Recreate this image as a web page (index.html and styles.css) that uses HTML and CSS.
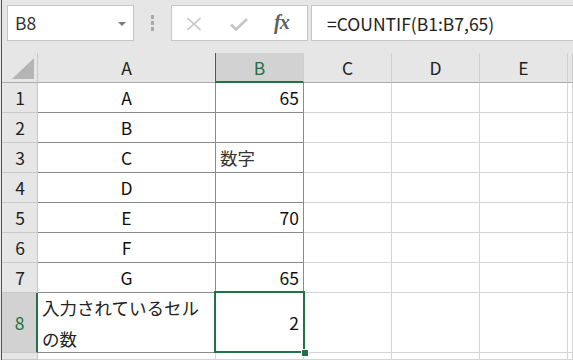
FILE: index.html
```html
<!DOCTYPE html>
<html lang="ja">
<head>
<meta charset="utf-8">
<link rel="stylesheet" href="styles.css">
</head>
<body>
<div class="app">
  <div class="toolbar">
    <div class="namebox"><span class="name">B8</span><span class="arrow"></span></div>
    <div class="dots"><i></i><i></i><i></i></div>
    <div class="fxbox">
      <svg class="ic-x" width="16" height="14" viewBox="0 0 16 14"><path d="M1.5 1 L14.5 13 M14.5 1 L1.5 13" stroke="#c4c4c4" stroke-width="1.7" fill="none"/></svg>
      <svg class="ic-ok" width="18" height="13" viewBox="0 0 18 13"><path d="M1 6.5 L6 11.5 L17 1" stroke="#c4c4c4" stroke-width="2.6" fill="none"/></svg>
      <span class="fx">fx</span>
    </div>
    <div class="formula">=COUNTIF(B1:B7,65)</div>
  </div>
  <div class="sheet">
    <div class="corner"><span class="tri"></span></div>
    <div class="ch">A</div>
    <div class="ch sel">B</div>
    <div class="ch">C</div>
    <div class="ch">D</div>
    <div class="ch">E</div>
    <div class="ch"></div>

    <div class="rh">1</div><div class="c a">A</div><div class="c b num">65</div><div class="c"></div><div class="c"></div><div class="c"></div><div class="c"></div>
    <div class="rh">2</div><div class="c a">B</div><div class="c b"></div><div class="c"></div><div class="c"></div><div class="c"></div><div class="c"></div>
    <div class="rh">3</div><div class="c a">C</div><div class="c b txt">数字</div><div class="c"></div><div class="c"></div><div class="c"></div><div class="c"></div>
    <div class="rh">4</div><div class="c a">D</div><div class="c b"></div><div class="c"></div><div class="c"></div><div class="c"></div><div class="c"></div>
    <div class="rh">5</div><div class="c a">E</div><div class="c b num">70</div><div class="c"></div><div class="c"></div><div class="c"></div><div class="c"></div>
    <div class="rh">6</div><div class="c a">F</div><div class="c b"></div><div class="c"></div><div class="c"></div><div class="c"></div><div class="c"></div>
    <div class="rh">7</div><div class="c a">G</div><div class="c b num">65</div><div class="c"></div><div class="c"></div><div class="c"></div><div class="c"></div>
    <div class="rh rsel">8</div><div class="c a wrap">入力されているセルの数</div><div class="c b num active">2<span class="selbox"><span class="handle"></span></span></div><div class="c"></div><div class="c"></div><div class="c"></div><div class="c"></div>
    <div class="rh"></div><div class="c"></div><div class="c"></div><div class="c"></div><div class="c"></div><div class="c"></div><div class="c"></div>
  </div>
</div>
</body>
</html>
```

FILE: styles.css
```css
html, body {
  margin: 0;
  padding: 0;
}
body {
  background: #e6e6e6;
  width: 573px;
  height: 360px;
  overflow: hidden;
  font-family: "Noto Sans CJK JP", "Noto Sans", sans-serif;
  font-size: 17.5px;
  color: #1a1a1a;
}
.app {
  margin-left: 1px;
  border-left: 1px solid #217346;
  height: 360px;
  width: 571px;
  overflow: hidden;
}
.toolbar {
  height: 53px;
  box-sizing: border-box;
  padding-top: 5px;
  display: flex;
  align-items: flex-start;
}
.namebox {
  margin-left: 5px;
  width: 127px;
  height: 36px;
  box-sizing: border-box;
  border: 1px solid #c6c6c6;
  background: #fff;
  display: flex;
  align-items: center;
  padding-left: 7px;
  padding-right: 7px;
  justify-content: space-between;
  flex: none;
}
.name {
  color: #333;
  line-height: 1;
}
.arrow {
  width: 0;
  height: 0;
  border-left: 4px solid transparent;
  border-right: 4px solid transparent;
  border-top: 4px solid #7a7a7a;
  margin-top: 1px;
}
.dots {
  margin-left: 17px;
  margin-top: 10px;
  width: 3px;
  display: flex;
  flex-direction: column;
  gap: 2px;
  flex: none;
}
.dots i {
  display: block;
  width: 3px;
  height: 4px;
  background: #a9a9a9;
}
.fxbox {
  margin-left: 17px;
  width: 137px;
  height: 36px;
  box-sizing: border-box;
  border: 1px solid #c6c6c6;
  background: #fff;
  display: flex;
  align-items: center;
  flex: none;
}
.ic-x {
  margin-left: 14px;
  margin-top: 1px;
}
.ic-ok {
  margin-left: 28px;
  margin-top: 2px;
}
.fx {
  margin-left: 26px;
  font-family: "Liberation Serif", "DejaVu Serif", serif;
  font-style: italic;
  font-weight: bold;
  font-size: 20px;
  color: #606060;
  letter-spacing: -1px;
  margin-top: -2px;
}
.formula {
  margin-left: 3px;
  flex: 1;
  min-width: 0;
  height: 36px;
  box-sizing: border-box;
  border: 1px solid #c6c6c6;
  border-right: none;
  background: #fff;
  display: flex;
  align-items: center;
  padding-left: 15px;
  color: #222;
  white-space: nowrap;
}
.sheet {
  display: grid;
  grid-template-columns: 36px 178px 88px 88px 88px 88px 1fr;
  grid-template-rows: 30px repeat(7, 30px) 60px 7px;
  background: #fff;
}
.sheet > div {
  box-sizing: border-box;
  border-right: 1px solid #d4d4d4;
  border-bottom: 1px solid #d4d4d4;
  display: flex;
  align-items: center;
  min-width: 0;
}
.sheet > .corner {
  background: #e6e6e6;
  border-right: 1px solid #c8c8c8;
  border-bottom: 1px solid #ababab;
  position: relative;
}
.tri {
  position: absolute;
  left: 10px;
  top: 5px;
  width: 0;
  height: 0;
  border-left: 22px solid transparent;
  border-bottom: 21px solid #b5b5b5;
}
.sheet > .ch {
  background: #e6e6e6;
  border-right: 1px solid #cfcfcf;
  border-bottom: 1px solid #ababab;
  justify-content: center;
  color: #222;
}
.sheet > .ch.sel {
  background: #d2d2d2;
  color: #217346;
  border-bottom: 2px solid #217346;
  box-shadow: -1px 0 0 #217346;
}
.sheet > .rh {
  background: #e6e6e6;
  border-right: 1px solid #c8c8c8;
  border-bottom: 1px solid #c8c8c8;
  justify-content: center;
  color: #222;
  padding-left: 1px;
}
.sheet > .rh.rsel {
  background: #d2d2d2;
  color: #217346;
  border-right: 2px solid #217346;
}
.sheet > .c.a,
.sheet > .c.b {
  border-right: 1px solid #8a8a8a;
  border-bottom: 1px solid #8a8a8a;
}
.sheet > .c.a {
  justify-content: center;
  color: #111;
}
.sheet > .c.num {
  justify-content: flex-end;
  padding-right: 4px;
  color: #111;
}
.sheet > .c.txt {
  padding-left: 4px;
  color: #333;
}
.sheet > .c.wrap {
  justify-content: flex-start;
  padding-left: 4px;
  padding-right: 2px;
  line-height: 31px;
  color: #222;
}
.sheet > .c.active {
  position: relative;
}
.selbox {
  position: absolute;
  left: -2px;
  top: -2px;
  right: -2px;
  bottom: -1px;
  border: 2px solid #217346;
}
.handle {
  position: absolute;
  right: -5px;
  bottom: -5px;
  width: 6px;
  height: 6px;
  background: #217346;
  box-shadow: 0 0 0 1px #fff;
}
```
